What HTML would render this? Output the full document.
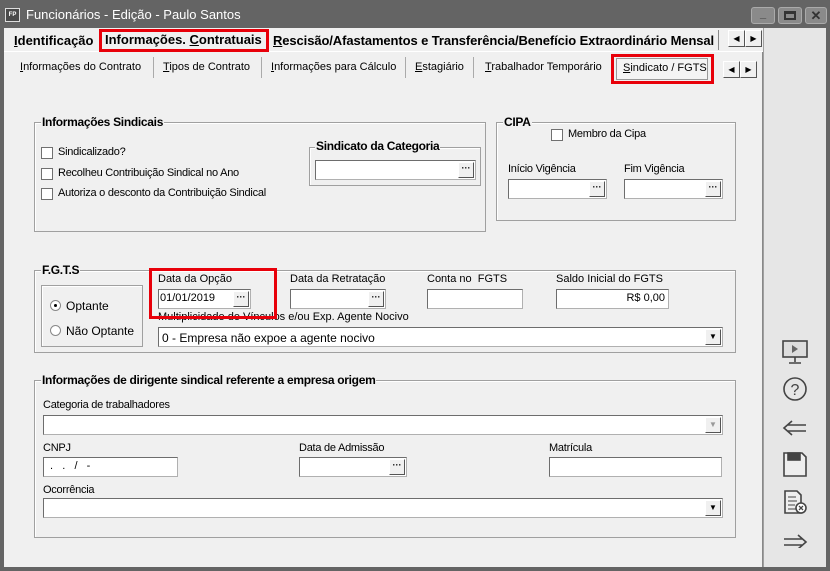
<!DOCTYPE html>
<html><head><meta charset="utf-8">
<style>
*{box-sizing:border-box;margin:0;padding:0}
body{width:830px;height:571px;overflow:hidden;background:#f0f0f0;font-family:"Liberation Sans",sans-serif;font-size:11px;color:#000;position:relative}
.a{position:absolute;white-space:nowrap}
.grp{position:absolute;border:1px solid #a0a0a0;box-shadow:inset 1px 1px 0 #fff}
.gt{position:absolute;top:-8px;left:6px;background:#f0f0f0;font-weight:bold;font-size:12px;padding:0 1px;letter-spacing:-0.3px}
.inp{position:absolute;background:#fff;border:1px solid #b0b0b0;border-top-color:#6d6d6d;border-left-color:#6d6d6d;height:20px}
.btn{position:absolute;right:1px;top:1px;width:16px;height:16px;background:#f0f0f0;border:1px solid #fff;border-right-color:#555;border-bottom-color:#555;font-size:9px;line-height:10px;text-align:center;font-weight:bold}
.chk{position:absolute;width:12px;height:12px;background:#fff;border:1px solid #707070}
.cn{letter-spacing:-0.25px}
.arr{position:absolute;width:17px;height:17px;background:#f0f0f0;border:1px solid #fff;border-right-color:#555;border-bottom-color:#555;font-size:8px;text-align:center;line-height:15px}
.red{position:absolute;border:3px solid #e8000a}
u{text-decoration:underline}
</style></head><body>
<div class="a" style="left:0;top:0;width:830px;height:28px;background:#646464"></div>
<div class="a" style="left:5px;top:8px;width:15px;height:14px;background:#4a4a4a;border:1px solid #ddd;color:#fff;font-size:6px;line-height:12px;text-align:center;font-weight:bold">FP</div>
<div class="a" style="left:26px;top:7px;color:#fff;font-size:13px">Funcionários - Edição - Paulo Santos</div>
<div class="a" style="left:751px;top:7px;width:24px;height:17px;background:#8a8a8a;border:1px solid #aaa;border-radius:3px;color:#333;text-align:center;font-size:11px;line-height:12px;font-weight:bold">_</div>
<div class="a" style="left:778px;top:7px;width:24px;height:17px;background:#8a8a8a;border:1px solid #aaa;border-radius:3px"><div style="margin:3px 5px;width:12px;height:9px;border:2px solid #333;border-top-width:3px"></div></div>
<div class="a" style="left:805px;top:7px;width:22px;height:17px;background:#8a8a8a;border:1px solid #aaa;border-radius:3px;color:#333;text-align:center;font-size:13px;line-height:15px;font-weight:bold">✕</div>
<div class="a" style="left:0;top:28px;width:4px;height:543px;background:#646464"></div>
<div class="a" style="left:826px;top:28px;width:4px;height:543px;background:#646464"></div>
<div class="a" style="left:0;top:567px;width:830px;height:4px;background:#646464"></div>
<div class="a" style="left:763px;top:28px;width:63px;height:539px;background:#e6e6e6;border-left:1px solid #a0a0a0"></div>
<div class="a" style="left:4px;top:51px;width:759px;height:1px;background:#fff"></div>
<div class="a" style="left:14px;top:33px;font-weight:bold;font-size:13px"><u>I</u>dentificação</div>
<div class="a" style="left:105px;top:32px;font-weight:bold;font-size:13px">Informações. <u>C</u>ontratuais</div>
<div class="red" style="left:99px;top:29px;width:170px;height:23px"></div>
<div class="a" style="left:273px;top:33px;font-weight:bold;font-size:13px;letter-spacing:-0.1px"><u>R</u>escisão/Afastamentos e Transferência/Benefício Extraordinário Mensal</div>
<div class="a" style="left:718px;top:30px;width:4px;height:20px;border-left:1px solid #888"></div>
<div class="arr" style="left:728px;top:30px">◀</div><div class="arr" style="left:745px;top:30px">▶</div>
<div class="a" style="left:4px;top:52px;width:759px;height:515px;border-right:1px solid #888"></div>
<div class="a" style="left:20px;top:61px"><u>I</u>nformações do Contrato</div>
<div class="a" style="left:153px;top:57px;width:1px;height:21px;background:#aaa"></div>
<div class="a" style="left:163px;top:61px"><u>T</u>ipos de Contrato</div>
<div class="a" style="left:261px;top:57px;width:1px;height:21px;background:#aaa"></div>
<div class="a" style="left:271px;top:61px"><u>I</u>nformações para Cálculo</div>
<div class="a" style="left:405px;top:57px;width:1px;height:21px;background:#aaa"></div>
<div class="a" style="left:415px;top:61px"><u>E</u>stagiário</div>
<div class="a" style="left:473px;top:57px;width:1px;height:21px;background:#aaa"></div>
<div class="a" style="left:485px;top:61px"><u>T</u>rabalhador Temporário</div>
<div class="a" style="left:616px;top:58px;width:92px;height:22px;border:1px solid #999;background:#f4f4f4"></div>
<div class="a" style="left:623px;top:62px"><u>S</u>indicato / FGTS</div>
<div class="red" style="left:611px;top:54px;width:103px;height:30px"></div>
<div class="arr" style="left:723px;top:61px">◀</div><div class="arr" style="left:740px;top:61px">▶</div>

<div class="grp" style="left:34px;top:122px;width:452px;height:110px"><div class="gt">Informações Sindicais</div></div>
<div class="chk" style="left:41px;top:147px"></div><div class="a cn" style="left:58px;top:146px">Sindicalizado?</div>
<div class="chk" style="left:41px;top:168px"></div><div class="a cn" style="left:58px;top:167px">Recolheu Contribuição Sindical no Ano</div>
<div class="chk" style="left:41px;top:188px"></div><div class="a cn" style="left:58px;top:187px">Autoriza o desconto da Contribuição Sindical</div>
<div class="grp" style="left:309px;top:147px;width:172px;height:39px"><div class="gt" style="font-size:12px;top:-9px;left:5px">Sindicato da Categoria</div></div>
<div class="inp" style="left:315px;top:160px;width:161px"><div class="btn">···</div></div>

<div class="grp" style="left:496px;top:122px;width:240px;height:99px"><div class="gt">CIPA</div></div>
<div class="chk" style="left:551px;top:129px"></div><div class="a cn" style="left:568px;top:128px">Membro da Cipa</div>
<div class="a cn" style="left:508px;top:163px">Início Vigência</div>
<div class="a cn" style="left:624px;top:163px">Fim Vigência</div>
<div class="inp" style="left:508px;top:179px;width:99px"><div class="btn">···</div></div>
<div class="inp" style="left:624px;top:179px;width:99px"><div class="btn">···</div></div>

<div class="grp" style="left:34px;top:270px;width:702px;height:83px"><div class="gt">F.G.T.S</div></div>
<div class="grp" style="left:41px;top:285px;width:102px;height:62px"></div>
<div class="a" style="left:50px;top:300px;width:11px;height:11px;border:1px solid #888;border-radius:50%;background:#fff"><div style="margin:3px;width:3px;height:3px;background:#000;border-radius:50%"></div></div>
<div class="a" style="left:66px;top:299px;font-size:12px">Optante</div>
<div class="a" style="left:50px;top:325px;width:11px;height:11px;border:1px solid #888;border-radius:50%;background:#fff"></div>
<div class="a" style="left:66px;top:324px;font-size:12px">Não Optante</div>
<div class="a" style="left:158px;top:273px">Data da Opção</div>
<div class="inp" style="left:158px;top:289px;width:93px"><div style="padding:2px 1px;font-size:11px">01/01/2019</div><div class="btn" style="top:1px">···</div></div>
<div class="a" style="left:290px;top:273px">Data da Retratação</div>
<div class="inp" style="left:290px;top:289px;width:96px"><div class="btn">···</div></div>
<div class="a" style="left:427px;top:273px">Conta no &nbsp;FGTS</div>
<div class="inp" style="left:427px;top:289px;width:96px"></div>
<div class="a" style="left:556px;top:273px">Saldo Inicial do FGTS</div>
<div class="inp" style="left:556px;top:289px;width:113px"><div style="text-align:right;padding:2px 3px">R$ 0,00</div></div>
<div class="a" style="left:158px;top:311px">Multiplicidade de Vínculos e/ou Exp. Agente Nocivo</div>
<div class="inp" style="left:158px;top:327px;width:565px"><div style="padding:3px 3px;font-size:12px">0 - Empresa não expoe a agente nocivo</div><div class="btn" style="font-size:8px;line-height:14px">▼</div></div>
<div class="red" style="left:149px;top:268px;width:128px;height:51px"></div>

<div class="grp" style="left:34px;top:380px;width:702px;height:158px"><div class="gt">Informações de dirigente sindical referente a empresa origem</div></div>
<div class="a cn" style="left:43px;top:399px">Categoria de trabalhadores</div>
<div class="inp" style="left:43px;top:415px;width:680px"><div class="btn" style="font-size:8px;line-height:14px;color:#999">▼</div></div>
<div class="a cn" style="left:43px;top:442px">CNPJ</div>
<div class="inp" style="left:43px;top:457px;width:135px"><div style="padding:2px 6px">. &nbsp; . &nbsp; / &nbsp; -</div></div>
<div class="a cn" style="left:299px;top:442px">Data de Admissão</div>
<div class="inp" style="left:299px;top:457px;width:108px"><div class="btn">···</div></div>
<div class="a cn" style="left:549px;top:442px">Matrícula</div>
<div class="inp" style="left:549px;top:457px;width:173px"></div>
<div class="a cn" style="left:43px;top:484px">Ocorrência</div>
<div class="inp" style="left:43px;top:498px;width:680px"><div class="btn" style="font-size:8px;line-height:14px">▼</div></div>

<svg class="a" style="left:780px;top:338px" width="30" height="210" viewBox="0 0 30 210" fill="none" stroke="#444" stroke-width="1.6">
<rect x="3" y="3" width="24" height="16" fill="#ddd"/><path d="M15 19v5M9 25h12"/><path d="M12 7l6 4-6 4z" fill="#666" stroke="none"/>
<circle cx="15" cy="51" r="11"/><text x="15" y="57" font-family="Liberation Sans" font-size="16" fill="#444" stroke="none" text-anchor="middle">?</text>
<path d="M26 87H8M26 93H8M12 83l-8 7 8 7"/>
<path d="M4 115h18l4 4v19H4z" fill="#eee"/><rect x="8" y="115" width="12" height="7" fill="#444"/>
<path d="M5 153h12l4 4v18H5z" fill="#eee"/><path d="M8 159h8M8 163h9M8 167h7M8 171h8" stroke-width="1"/><circle cx="21" cy="170" r="5" fill="#fff"/><path d="M19 168l4 4M23 168l-4 4" stroke-width="1.3"/>
<path d="M4 201h18M4 207h18M18 197l8 7-8 7"/>
</svg>
</body></html>
